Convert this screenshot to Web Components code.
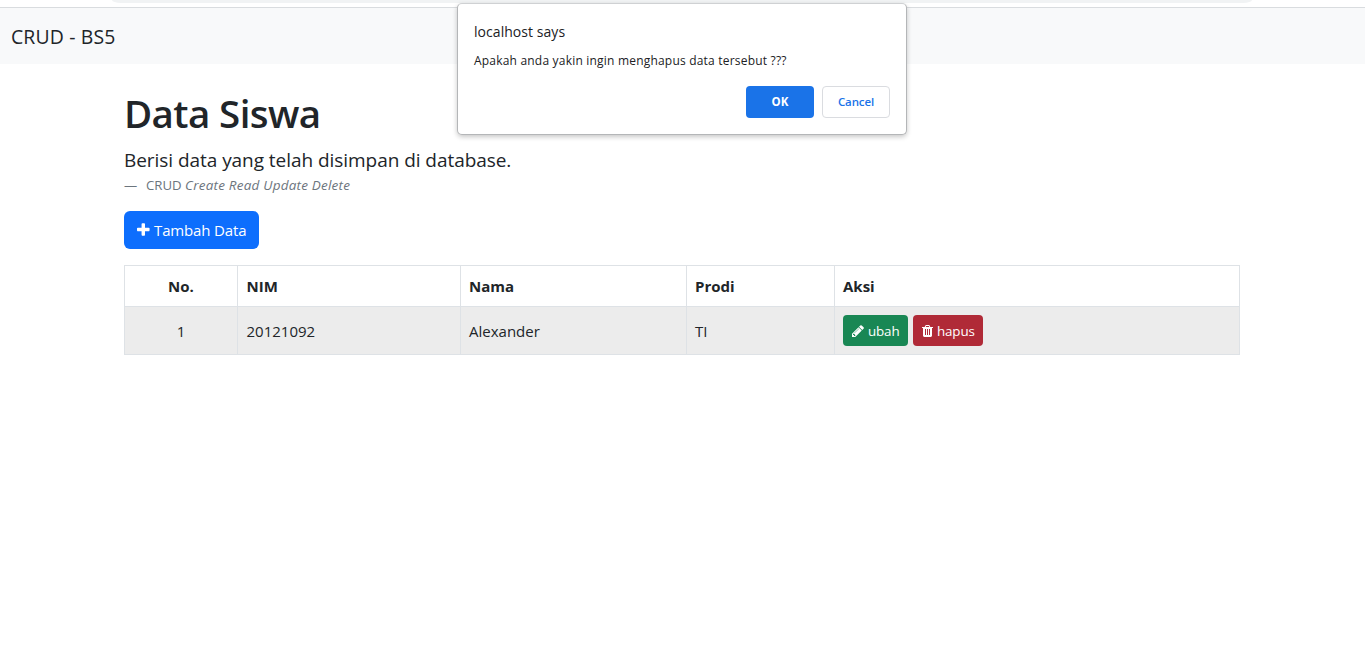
<!DOCTYPE html>
<html lang="id">
<head>
<meta charset="utf-8">
<title>CRUD - BS5</title>
<style>
  html, body { margin: 0; height: 100%; overflow: hidden; background: #fff; }
  body { font-family: "Open Sans", "Noto Sans", sans-serif; font-size: 15px; line-height: 24px; color: #212529; }
</style>
</head>
<body>
<crud-page></crud-page>
<script>
class BaseElement extends HTMLElement {
  connectedCallback() {
    if (this.shadowRoot) return;
    this.attachShadow({ mode: 'open' }).innerHTML = this.view();
  }
}

const ICONS = {
  plus: [1408, 'M1408 736v192q0 40-28 68t-68 28h-416v416q0 40-28 68t-68 28h-192q-40 0-68-28t-28-68v-416h-416q-40 0-68-28t-28-68v-192q0-40 28-68t68-28h416v-416q0-40 28-68t68-28h192q40 0 68 28t28 68v416h416q40 0 68 28t28 68z'],
  pencil: [1536, 'M363 1536l91-91-235-235-91 91v107h128v128h107zm523-928q0-22-22-22-10 0-17 7l-542 542q-7 7-7 17 0 22 22 22 10 0 17-7l542-542q7-7 7-17zm-54-192l416 416-832 832h-416v-416zm683 96q0 53-37 90l-166 166-416-416 166-165q36-38 90-38 53 0 91 38l235 234q37 39 37 91z'],
  trash: [1408, 'M512 1376v-704q0-14-9-23t-23-9h-64q-14 0-23 9t-9 23v704q0 14 9 23t23 9h64q14 0 23-9t9-23zm256 0v-704q0-14-9-23t-23-9h-64q-14 0-23 9t-9 23v704q0 14 9 23t23 9h64q14 0 23-9t9-23zm256 0v-704q0-14-9-23t-23-9h-64q-14 0-23 9t-9 23v704q0 14 9 23t23 9h64q14 0 23-9t9-23zm-544-992h448l-48-117q-7-9-17-11h-317q-10 2-17 11zm928 32v64q0 14-9 23t-23 9h-96v948q0 83-47 143.500t-113 60.500h-832q-66 0-113-58.500t-47-141.500v-952h-96q-14 0-23-9t-9-23v-64q0-14 9-23t23-9h309l70-167q15-37 54-63t79-26h320q40 0 79 26t54 63l70 167h309q14 0 23 9t9 23z']
};

customElements.define('fa-icon', class extends BaseElement {
  view() {
    const [w, d] = ICONS[this.getAttribute('name')];
    const size = Number(this.getAttribute('size') || 16);
    return `<style>:host{display:block;flex:none} svg{display:block;fill:currentColor}</style>
      <svg width="${w / 1792 * size}" height="${size}" viewBox="0 0 ${w} 1792"><path d="${d}"/></svg>`;
  }
});

customElements.define('browser-edge', class extends BaseElement {
  view() {
    return `<style>
      :host{display:block;box-sizing:border-box;height:8px;padding:0 113px 0 112px;border-bottom:1px solid #d9dcdf;background:#fff}
      div{height:3px;background:#f1f3f4;border-radius:0 0 9px 9px / 0 0 3px 3px}
    </style><div></div>`;
  }
});

customElements.define('nav-bar', class extends BaseElement {
  view() {
    return `<style>
      :host{display:flex;align-items:center;box-sizing:border-box;height:56px;padding:0 11px 0;background:#f8f9fa;
        font-size:19.4px;line-height:30px;letter-spacing:.15px;white-space:nowrap}
      span{padding-top:2px}
    </style><span><slot></slot></span>`;
  }
});

customElements.define('bs-button', class extends BaseElement {
  view() {
    return `<style>
      :host{display:inline-flex}
      button{all:unset;box-sizing:border-box;display:flex;align-items:center;width:135px;height:38px;padding:0 13px;gap:4.5px;
        border-radius:6px;background:#0d6efd;color:#fff;font-size:15px;line-height:24px;white-space:nowrap;letter-spacing:-.15px}
      :host([kind=success]) button,:host([kind=danger]) button{height:31px;padding:0 9px;gap:4px;border-radius:4px;font-size:13.4px;line-height:21px;letter-spacing:-.15px}
      :host([kind=success]) span,:host([kind=danger]) span{padding-top:2px}
      :host([kind=success]) button{width:65px;background:#198754}
      :host([kind=danger]) button{width:70px;background:#b02a37}
    </style><button type="button"><slot name="icon"></slot><span><slot></slot></span></button>`;
  }
});

customElements.define('page-heading', class extends BaseElement {
  view() {
    return `<style>
      :host{display:block}
      h1{margin:0 0 8px;font-size:38.5px;line-height:48px;font-weight:600;letter-spacing:-.6px}
      p{margin:0;font-size:19px;line-height:30px;letter-spacing:-.05px}
      footer{display:flex;gap:8px;font-size:13.2px;line-height:21px;color:#6c757d;letter-spacing:0}
      footer span:first-child{width:14px}
      cite{font-size:13.5px;letter-spacing:.21px}
    </style>
    <h1>Data Siswa</h1>
    <p>Berisi data yang telah disimpan di database.</p>
    <footer><span>—</span><span>CRUD <cite>Create Read Update Delete</cite></span></footer>`;
  }
});

customElements.define('student-table', class extends BaseElement {
  view() {
    return `<style>
      :host{display:block}
      table{width:1116px;border-collapse:collapse;table-layout:fixed;font-size:15px;line-height:24px}
      th,td{box-sizing:border-box;border:1px solid #dee2e6;padding:0 8px;text-align:left;vertical-align:middle}
      th{font-weight:700} thead tr{height:41px} tbody tr{height:48px;background:#ececec}
      th:first-child,td:first-child{text-align:center}
      th:nth-child(2),td:nth-child(2){padding-left:8.5px}
      .actions{display:flex;gap:5px}
    </style>
    <table>
      <colgroup><col style="width:113px"><col style="width:223px"><col style="width:226px"><col style="width:148px"><col></colgroup>
      <thead><tr><th>No.</th><th>NIM</th><th>Nama</th><th>Prodi</th><th>Aksi</th></tr></thead>
      <tbody><tr><td>1</td><td>20121092</td><td>Alexander</td><td>TI</td>
        <td><div class="actions">
          <bs-button kind="success"><fa-icon slot="icon" name="pencil" size="14"></fa-icon>ubah</bs-button>
          <bs-button kind="danger"><fa-icon slot="icon" name="trash" size="14"></fa-icon>hapus</bs-button>
        </div></td></tr></tbody>
    </table>`;
  }
});

customElements.define('confirm-dialog', class extends BaseElement {
  view() {
    return `<style>
      :host{position:absolute;top:3px;left:457px;box-sizing:border-box;width:450px;height:132px;padding:18px 16px 16px;
        display:flex;flex-direction:column;background:#fff;border:1px solid #b4b6b8;border-top-color:#cfd1d3;border-radius:5px;
        box-shadow:0 2px 5px rgba(0,0,0,.22);color:#202124;white-space:nowrap}
      h2{margin:0;font-size:14px;font-weight:400;line-height:20px;letter-spacing:.05px}
      p{margin:11px 0 0;font-size:12px;line-height:16px;letter-spacing:.2px}
      .row{display:flex;justify-content:flex-end;gap:8px;margin-top:auto}
      button{all:unset;box-sizing:border-box;width:68px;height:32px;border-radius:4px;text-align:center;font-size:11.5px;line-height:32px;font-weight:700;background:#1a73e8;color:#fff}
      button+button{background:#fff;border:1px solid #dadce0;color:#1a73e8;line-height:30px;font-weight:600;letter-spacing:-.1px}
    </style>
    <h2>localhost says</h2>
    <p>Apakah anda yakin ingin menghapus data tersebut ???</p>
    <div class="row"><button>OK</button><button>Cancel</button></div>`;
  }
});

customElements.define('crud-page', class extends BaseElement {
  view() {
    return `<style>
      :host{display:block}
      main{width:1116px;margin-left:124px;padding-top:25px;display:flex;flex-direction:column;align-items:flex-start}
      bs-button{margin:15px 0 16px}
    </style>
    <browser-edge></browser-edge>
    <nav-bar>CRUD - BS5</nav-bar>
    <main>
      <page-heading></page-heading>
      <bs-button><fa-icon slot="icon" name="plus" size="16"></fa-icon>Tambah Data</bs-button>
      <student-table></student-table>
    </main>
    <confirm-dialog></confirm-dialog>`;
  }
});
</script>
</body>
</html>
